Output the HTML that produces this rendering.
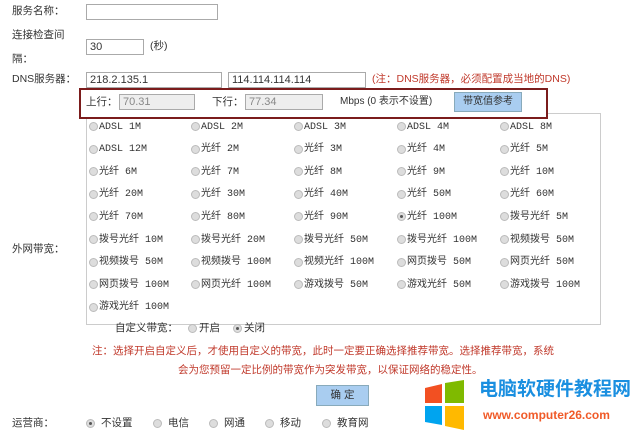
<!DOCTYPE html>
<html><head><meta charset="utf-8"><style>
body{margin:0;width:631px;height:434px;background:#fff;position:relative;overflow:hidden;font-family:"Liberation Sans","Noto Sans CJK SC",sans-serif;font-size:10.5px;color:#333}
.a{position:absolute;white-space:nowrap;line-height:14px}
.in{position:absolute;border:1px solid #aaa;background:#fff;height:16px;box-sizing:border-box;font-size:11px;color:#333;padding-left:3px;line-height:14px}
.r{position:absolute;width:9px;height:9px;border-radius:50%;background:#ddd;border:1px solid #bbb;box-sizing:border-box}
.r.c::after{content:"";position:absolute;left:2px;top:2px;width:3px;height:3px;border-radius:50%;background:#555}
.red{color:#c0392b}
.gi{position:absolute;white-space:nowrap;height:12px;line-height:12px;font-size:10px;font-family:"Liberation Mono","Noto Sans CJK SC",monospace;overflow:visible}
</style></head><body>
<div class="a" style="left:12px;top:4px">服务名称：</div>
<div class="in" style="left:86px;top:4px;width:132px"></div>
<div class="a" style="left:12px;top:28px">连接检查间</div>
<div class="a" style="left:12px;top:52px">隔：</div>
<div class="in" style="left:86px;top:39px;width:58px">30</div>
<div class="a" style="left:150px;top:39px">(秒)</div>
<div class="a" style="left:12px;top:72px">DNS服务器：</div>
<div class="in" style="left:86px;top:72px;width:136px">218.2.135.1</div>
<div class="in" style="left:228px;top:72px;width:138px">114.114.114.114</div>
<div class="a red" style="left:372px;top:72px">(注：DNS服务器，必须配置成当地的DNS)</div>
<div style="position:absolute;left:86px;top:113px;width:515px;height:212px;border:1px solid #ccc;box-sizing:border-box"></div>
<div style="position:absolute;left:79px;top:88px;width:469px;height:31px;border:2px solid #7b1c1c;box-sizing:border-box;background:#fff"></div>
<div class="a" style="left:86px;top:95px">上行：</div>
<div class="in" style="left:119px;top:94px;width:76px;background:#eee;color:#888">70.31</div>
<div class="a" style="left:212px;top:95px">下行：</div>
<div class="in" style="left:245px;top:94px;width:78px;background:#eee;color:#888">77.34</div>
<div class="a" style="left:340px;top:95px;font-size:10px">Mbps (0 表示不设置)</div>
<div class="a" style="left:454px;top:92px;width:68px;height:20px;background:#a9cdf0;border:1px solid #8ab;box-sizing:border-box;text-align:center;line-height:18px;font-size:10px">带宽值参考</div>
<div id="g"></div>
<div class="a" style="left:12px;top:242px">外网带宽：</div>
<div class="a" style="left:115px;top:321px">自定义带宽：</div>
<div class="r" style="left:188px;top:324px"></div><div class="a" style="left:199px;top:321px">开启</div>
<div class="r c" style="left:233px;top:324px"></div><div class="a" style="left:244px;top:321px">关闭</div>
<div class="a red" style="left:92px;top:344px">注：选择开启自定义后，才使用自定义的带宽，此时一定要正确选择推荐带宽。选择推荐带宽，系统</div>
<div class="a red" style="left:178px;top:363px">会为您预留一定比例的带宽作为突发带宽，以保证网络的稳定性。</div>
<div class="a" style="left:316px;top:385px;width:53px;height:21px;background:#a9cdf0;border:1px solid #8ab;box-sizing:border-box;text-align:center;line-height:19px">确 定</div>
<div class="a" style="left:12px;top:416px">运营商：</div>
<div class="r c" style="left:86px;top:419px"></div><div class="a" style="left:101px;top:416px">不设置</div>
<div class="r" style="left:153px;top:419px"></div><div class="a" style="left:168px;top:416px">电信</div>
<div class="r" style="left:209px;top:419px"></div><div class="a" style="left:224px;top:416px">网通</div>
<div class="r" style="left:265px;top:419px"></div><div class="a" style="left:280px;top:416px">移动</div>
<div class="r" style="left:322px;top:419px"></div><div class="a" style="left:337px;top:416px">教育网</div>
<svg style="position:absolute;left:424px;top:380px" width="42" height="50"><polygon points="1,8 18,4 18,23 1,23" fill="#f25022"/><polygon points="21,3 40,0 40,23 21,23" fill="#7fba00"/><polygon points="1,26 18,26 18,45 1,42" fill="#00a4ef"/><polygon points="21,26 40,26 40,50 21,46" fill="#ffb900"/></svg>
<div class="a" style="left:479px;top:383px;font-size:19px;font-weight:bold;color:#1a8fe0">电脑软硬件教程网</div>
<div class="a" style="left:483px;top:408px;font-size:12px;font-weight:bold;color:#f05a28">www.computer26.com</div>
<script>
var items=["ADSL 1M","ADSL 2M","ADSL 3M","ADSL 4M","ADSL 8M","ADSL 12M","光纤 2M","光纤 3M","光纤 4M","光纤 5M","光纤 6M","光纤 7M","光纤 8M","光纤 9M","光纤 10M","光纤 20M","光纤 30M","光纤 40M","光纤 50M","光纤 60M","光纤 70M","光纤 80M","光纤 90M","光纤 100M","拨号光纤 5M","拨号光纤 10M","拨号光纤 20M","拨号光纤 50M","拨号光纤 100M","视频拨号 50M","视频拨号 50M","视频拨号 100M","视频光纤 100M","网页拨号 50M","网页光纤 50M","网页拨号 100M","网页光纤 100M","游戏拨号 50M","游戏光纤 50M","游戏拨号 100M","游戏光纤 100M"];
var xs=[89,191,294,397,500],h="";
items.forEach(function(t,i){var x=xs[i%5],y=121+Math.floor(i/5)*22.6;
h+='<div class="r'+(i==23?' c':'')+'" style="left:'+x+'px;top:'+(y+1)+'px"></div><div class="gi" style="left:'+(x+10)+'px;top:'+(y+0.5)+'px">'+t+'</div>';});
document.getElementById('g').innerHTML=h;
</script>
</body></html>
